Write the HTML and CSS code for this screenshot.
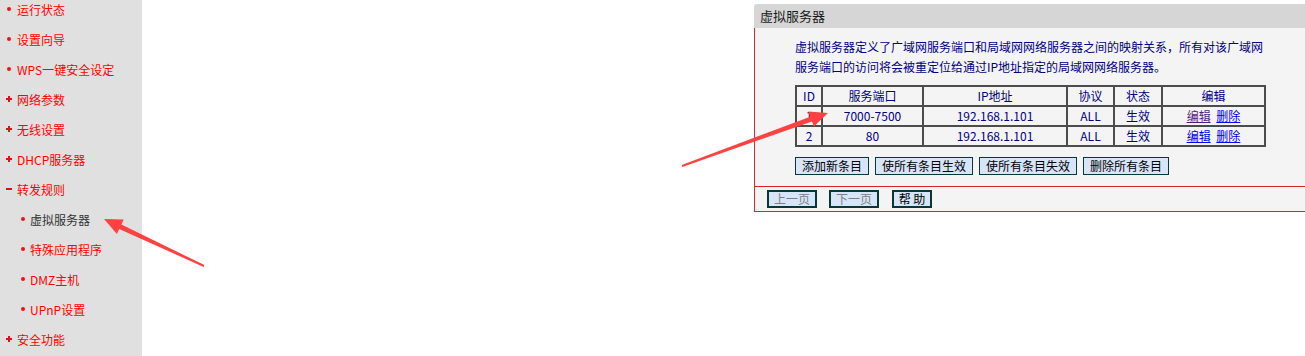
FILE: index.html
```html
<!DOCTYPE html>
<html lang="zh-CN">
<head>
    <meta charset="UTF-8">
    <meta name="viewport" content="width=device-width, initial-scale=1.0">
    <title>虚拟服务器</title>
    <link rel="stylesheet" href="styles.css">
</head>
<body>
    <div class="page">
        <ul class="menu">
            <li><span class="dot"></span>运行状态</li>
            <li><span class="dot"></span>设置向导</li>
            <li><span class="dot"></span>WPS一键安全设定</li>
            <li><span class="plus"></span>网络参数</li>
            <li><span class="plus"></span>无线设置</li>
            <li><span class="plus"></span>DHCP服务器</li>
            <li><span class="minus"></span>转发规则</li>
            <li class="sub current"><span class="dot"></span>虚拟服务器</li>
            <li class="sub"><span class="dot"></span>特殊应用程序</li>
            <li class="sub"><span class="dot"></span>DMZ主机</li>
            <li class="sub"><span class="dot"></span>UPnP设置</li>
            <li><span class="plus"></span>安全功能</li>
        </ul>

        <div class="content">
            <div class="panel">
                <div class="panel-title">虚拟服务器</div>
                <div class="panel-body">
                    <div class="panel-main">
                        <p class="intro">虚拟服务器定义了广域网服务端口和局域网网络服务器之间的映射关系，所有对该广域网服务端口的访问将会被重定位给通过IP地址指定的局域网网络服务器。</p>
                        <table class="rules">
                            <colgroup>
                                <col style="width: 26px">
                                <col style="width: 101px">
                                <col style="width: 144px">
                                <col style="width: 47px">
                                <col style="width: 48px">
                                <col style="width: 103px">
                            </colgroup>
                            <tr>
                                <th>ID</th>
                                <th>服务端口</th>
                                <th>IP地址</th>
                                <th>协议</th>
                                <th>状态</th>
                                <th>编辑</th>
                            </tr>
                            <tr>
                                <td>1</td>
                                <td>7000-7500</td>
                                <td>192.168.1.101</td>
                                <td>ALL</td>
                                <td>生效</td>
                                <td><a href="#" class="visited">编辑</a> <a href="#">删除</a></td>
                            </tr>
                            <tr>
                                <td>2</td>
                                <td>80</td>
                                <td>192.168.1.101</td>
                                <td>ALL</td>
                                <td>生效</td>
                                <td><a href="#">编辑</a> <a href="#">删除</a></td>
                            </tr>
                        </table>
                        <div class="actions">
                            <button>添加新条目</button>
                            <button>使所有条目生效</button>
                            <button>使所有条目失效</button>
                            <button>删除所有条目</button>
                        </div>
                    </div>
                    <div class="panel-foot">
                        <button class="nav" disabled>上一页</button>
                        <button class="nav" disabled>下一页</button>
                        <button class="nav help">帮 助</button>
                    </div>
                </div>
            </div>
        </div>
    </div>

    <!-- red annotation arrows drawn over the screenshot -->
    <svg class="arrows" width="1305" height="356" viewBox="0 0 1305 356">
        <polygon points="204.4,265.1 121.4,224.4 123.7,219.5 104,219 116.9,233.9 119.2,229 203.6,266.9"/>
        <polygon points="681.7,165.1 810.2,116.7 808.4,111.6 828,113 813.8,126.6 812,121.5 682.3,166.9"/>
    </svg>
</body>
</html>
```

FILE: styles.css
```css
body {
    margin: 0;
    font-family: "Noto Sans CJK SC", "Liberation Sans", sans-serif;
    font-size: 12px;
    background-color: #fff;
    overflow: hidden;
}

.page {
    display: flex;
    height: 356px;
    overflow: hidden;
}

/* left menu */
.menu {
    width: 142px;
    flex-shrink: 0;
    margin: 0;
    padding: 0;
    list-style: none;
    background-color: #e0e0e0;
}

.menu li {
    display: flex;
    align-items: center;
    height: 30px;
    color: #ff0000;
}

.menu li:first-child {
    margin-top: -6px;
}

.menu .dot {
    width: 4px;
    height: 4px;
    margin: 0 6px 0 7px;
    border-radius: 50%;
    background-color: #f01010;
}

.menu .plus {
    width: 6px;
    height: 6px;
    margin: 0 5px 0 6px;
    background:
        linear-gradient(#e01010, #e01010) center / 6px 2px no-repeat,
        linear-gradient(#e01010, #e01010) center / 2px 6px no-repeat;
}

.menu .minus {
    width: 6px;
    height: 2px;
    margin: 0 5px 0 6px;
    background-color: #e01010;
}

.menu .sub .dot {
    margin: 0 5px 0 21px;
}

.menu .current {
    color: #333;
}

/* right panel */
.content {
    flex: 1;
    padding: 4px 0 0 612px;
}

.panel-title {
    height: 24px;
    line-height: 24px;
    padding-left: 6px;
    font-size: 13px;
    color: #1a1a1a;
    background-color: #d6d6d6;
    border-top-left-radius: 3px;
}

.panel-body {
    background-color: #f4f4f4;
    border-left: 1px solid #d82a2a;
    border-bottom: 1px solid #d02828;
}

.panel-main {
    padding: 9px 0 11px 40px;
}

.intro {
    width: 470px;
    margin: 0;
    line-height: 20px;
    color: #000080;
}

.rules {
    width: 469px;
    margin-top: 8px;
    table-layout: fixed;
    border-collapse: collapse;
    border: 2px solid #4c4c4c;
    color: #000080;
}

.rules th,
.rules td {
    height: 18px;
    padding: 0;
    border: 2px solid #4c4c4c;
    text-align: center;
    font-weight: normal;
    line-height: 16px;
}

.rules a {
    color: #0000ee;
}

.rules a + a {
    margin-left: 3px;
}

.rules a.visited {
    color: #551a8b;
}

.actions {
    display: flex;
    gap: 6px;
    margin-top: 10px;
}

button {
    height: 18px;
    padding: 0 6px;
    box-sizing: border-box;
    border: 1px solid #0b3636;
    border-radius: 0;
    background-color: #d6e5f8;
    font-family: inherit;
    font-size: 12px;
    line-height: 14px;
    color: #000;
    white-space: nowrap;
}

button:disabled {
    color: #808080;
}

.panel-foot {
    display: flex;
    gap: 12px;
    padding: 3px 0 3px 12px;
    border-top: 1px solid #d02828;
}

.panel-foot .nav {
    width: 50px;
    padding: 0;
    border-width: 2px;
}

.panel-foot .help {
    width: 40px;
    margin-left: 1px;
}

.arrows {
    position: absolute;
    top: 0;
    left: 0;
    pointer-events: none;
    fill: #ff4141;
}
```
